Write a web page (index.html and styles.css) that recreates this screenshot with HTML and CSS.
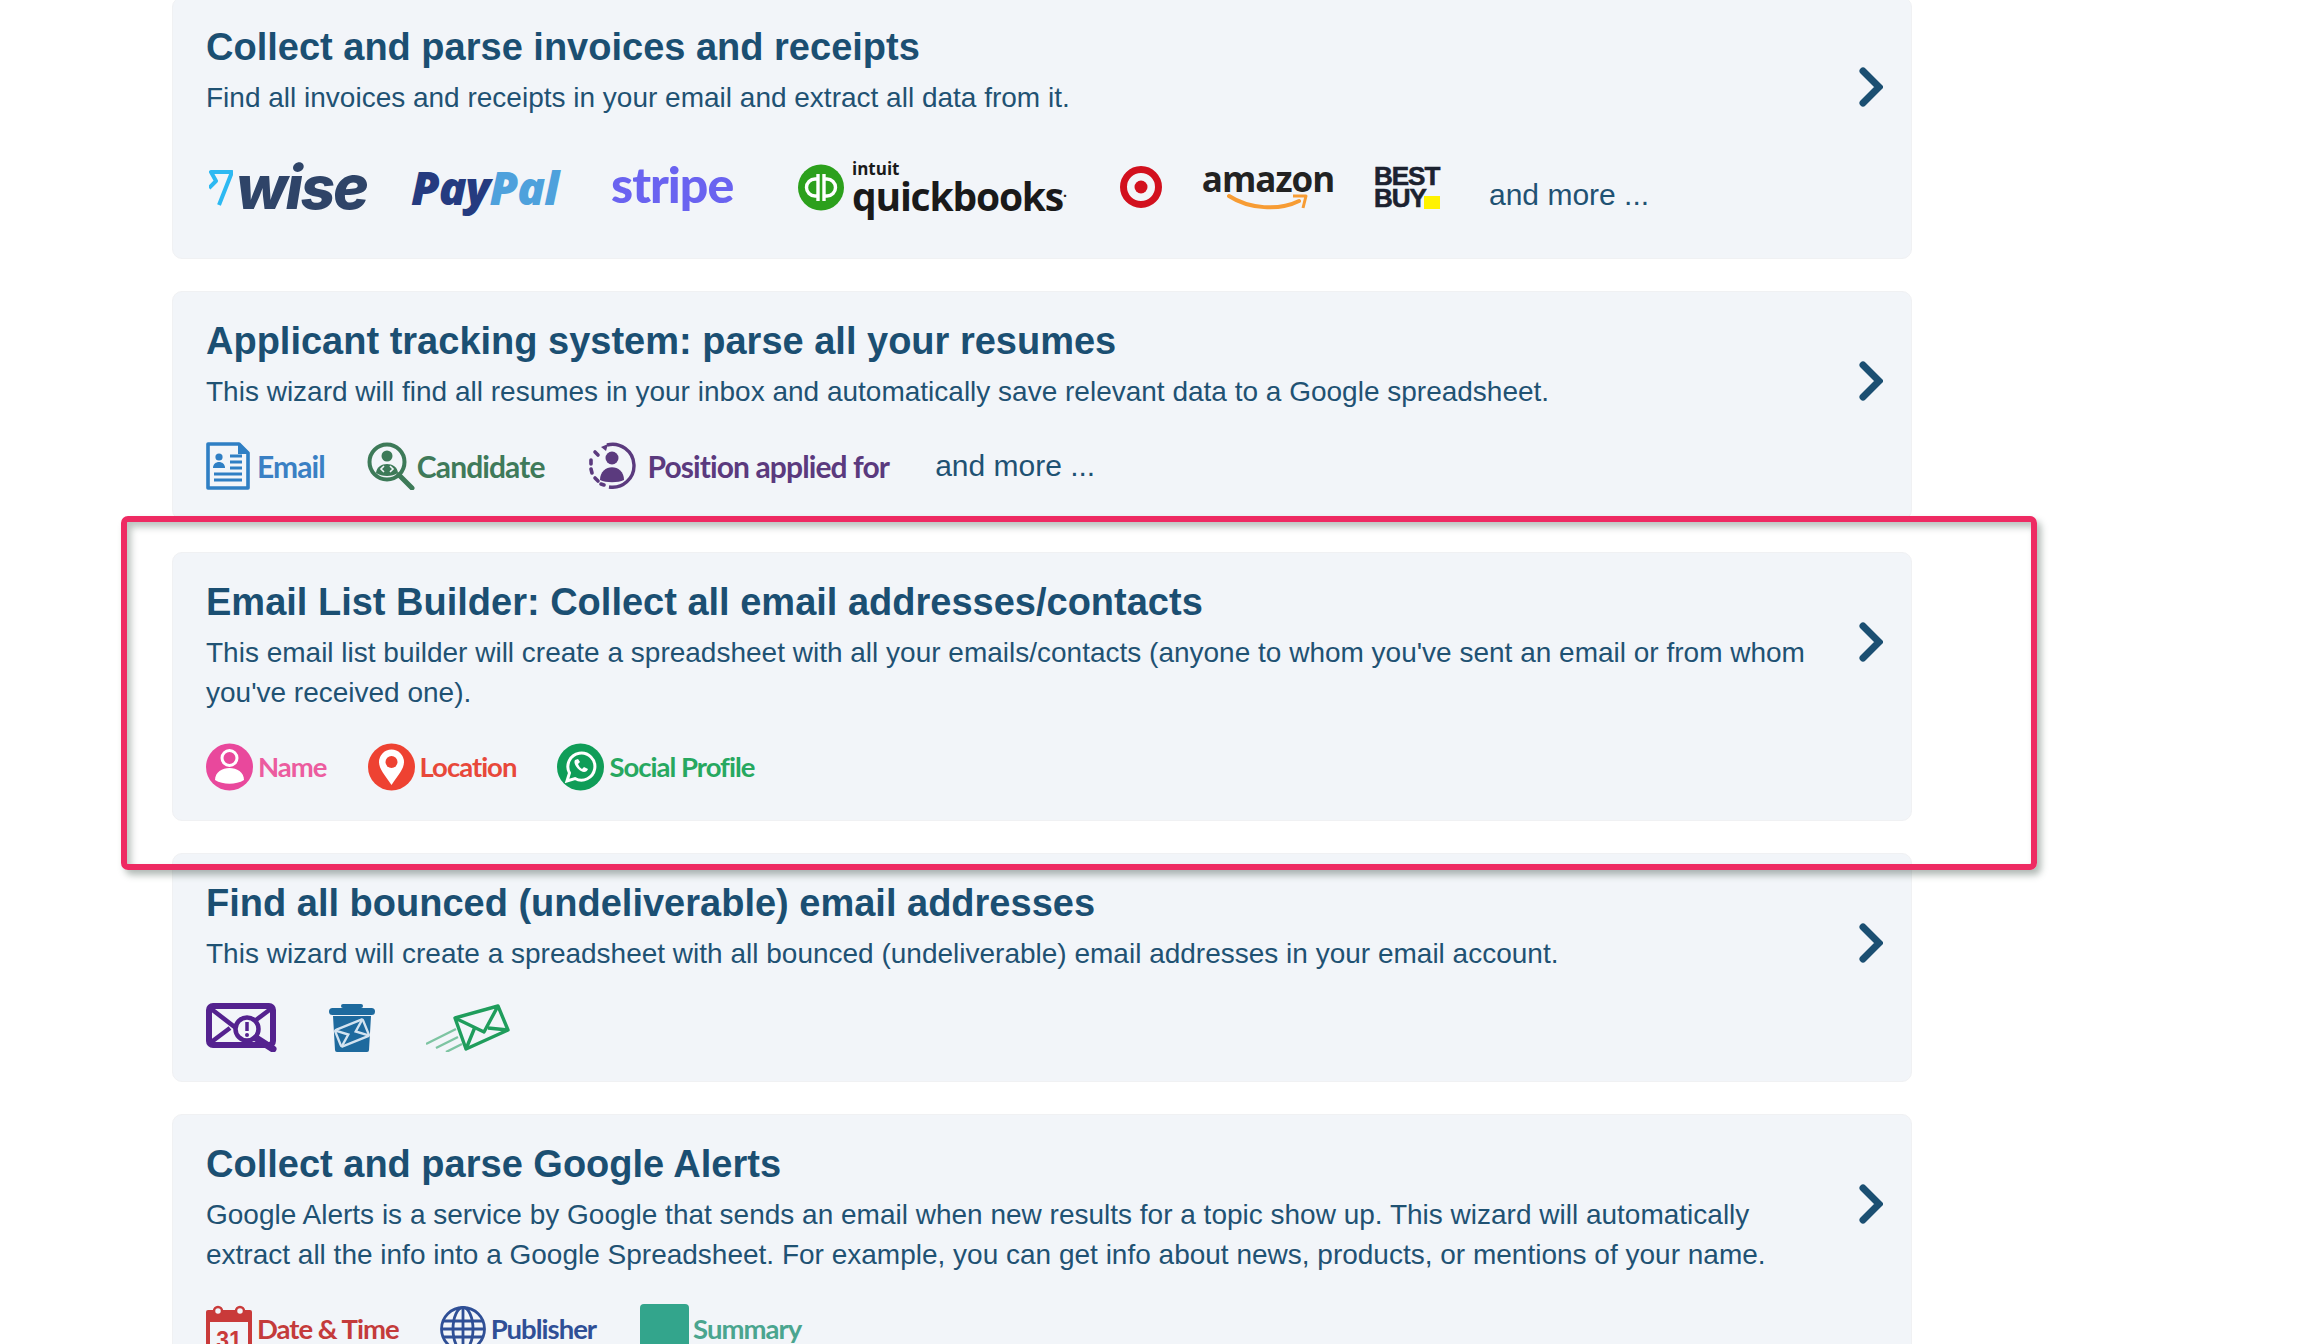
FILE: index.html
```html
<!DOCTYPE html>
<html lang="en">
<head>
<meta charset="utf-8">
<title>Wizards</title>
<link rel="stylesheet" href="styles.css">
</head>
<body>
<main class="list">

<section class="card">
  <div class="body">
    <h2>Collect and parse invoices and receipts</h2>
    <p>Find all invoices and receipts in your email and extract all data from it.</p>
    <div class="logos">
      <span class="logo wise">
        <svg width="24" height="38" viewBox="0 0 24 38"><path d="M0 20 L7 13 L2 4 H23 L10 37" fill="none" stroke="#2db9f2" stroke-width="4" stroke-linejoin="round"/></svg>
        <span class="wise-word">wise</span>
      </span>
      <span class="logo paypal"><span class="pay">Pay</span><span class="pal">Pal</span></span>
      <span class="logo stripe">stripe</span>
      <span class="logo qb">
        <svg width="46" height="47" viewBox="0 0 46 47"><circle cx="23" cy="23.5" r="23" fill="#2ca01c"/><g fill="none" stroke="#fff" stroke-width="3.4"><path d="M20 10v27"/><path d="M26 37V10"/><path d="M20 15h-3a8 8 0 0 0 0 17h3"/><path d="M26 15h3a8 8 0 0 1 0 17h-3"/></g></svg>
        <span class="qb-words"><span class="intuit">intuit</span><span class="quick">quickbooks<sup class="dot">.</sup></span></span>
      </span>
      <span class="logo target">
        <svg width="42" height="42" viewBox="0 0 42 42"><circle cx="21" cy="21" r="17.5" fill="none" stroke="#d2101e" stroke-width="7"/><circle cx="21" cy="21" r="6.5" fill="#d2101e"/></svg>
      </span>
      <span class="logo amazon">
        <span class="amazon-word">amazon</span>
        <svg class="smile" width="82" height="18" viewBox="0 0 82 18"><path d="M2 3 C22 16 52 18 72 8" fill="none" stroke="#f79c34" stroke-width="4" stroke-linecap="round"/><path d="M66 3 L79 3 L76 15" fill="none" stroke="#f79c34" stroke-width="3" stroke-linejoin="round"/></svg>
      </span>
      <span class="logo bestbuy"><span class="bb">BEST<br>BUY</span><span class="bb-tag"></span></span>
      <span class="more more-logos">and more ...</span>
    </div>
  </div>
  <svg class="chev" width="24" height="40" viewBox="0 0 24 40"><path d="M4 4 L20 20 L4 36" fill="none" stroke="#1b4f72" stroke-width="7" stroke-linecap="round"/></svg>
</section>

<section class="card">
  <div class="body">
    <h2>Applicant tracking system: parse all your resumes</h2>
    <p>This wizard will find all resumes in your inbox and automatically save relevant data to a Google spreadsheet.</p>
    <div class="tags tags-large">
      <span class="tag tag-email c-email">
        <svg width="44" height="48" viewBox="0 0 44 48"><path d="M2 2H33L42 11V46H2Z" fill="none" stroke="#2f7fc4" stroke-width="3.6" stroke-linejoin="round"/><path d="M32 2V12H42" fill="#2f7fc4"/><circle cx="13" cy="15" r="3.6" fill="#2f7fc4"/><path d="M7 26c0-8 12-8 12 0z" fill="#2f7fc4"/><path d="M24 14H36M24 20H36M24 26H36M8 32H36M8 38H36" stroke="#2f7fc4" stroke-width="3"/></svg>
        <span>Email</span>
      </span>
      <span class="tag tag-candidate c-candidate">
        <svg width="48" height="48" viewBox="0 0 48 48"><circle cx="20" cy="20" r="17.5" fill="none" stroke="#3d7a58" stroke-width="4"/><path d="M32 33 L45 46" stroke="#3d7a58" stroke-width="5" stroke-linecap="round"/><circle cx="20" cy="14" r="5.5" fill="#3d7a58"/><path d="M9 31c1-12 21-12 22 0c-6 4-16 4-22 0z" fill="#3d7a58"/><path d="M17 24l-3 3 3 3M23 24l3 3-3 3" stroke="#f2f5f9" stroke-width="1.6" fill="none"/></svg>
        <span>Candidate</span>
      </span>
      <span class="tag tag-position c-position">
        <svg width="50" height="48" viewBox="0 0 50 48"><path d="M20 3A21.500 21.500 0 1 1 22 45" fill="none" stroke="#5b3a7e" stroke-width="3.400"/><path d="M14 5l7-3-2 7z" fill="#5b3a7e"/><path d="M8 10l3 3M4 18v4M4 27l1 4M8 36l3 3M14 42l3 1" stroke="#5b3a7e" stroke-width="3.600" stroke-linecap="round"/><circle cx="25" cy="16" r="6.500" fill="#5b3a7e"/><path d="M13 38c0-17 24-17 24 0c-6 3-18 3-24 0z" fill="#5b3a7e"/></svg>
        <span>Position applied for</span>
      </span>
      <span class="more more-tags">and more ...</span>
    </div>
  </div>
  <svg class="chev" width="24" height="40" viewBox="0 0 24 40"><path d="M4 4 L20 20 L4 36" fill="none" stroke="#1b4f72" stroke-width="7" stroke-linecap="round"/></svg>
</section>

<section class="card">
  <div class="body">
    <h2>Email List Builder: Collect all email addresses/contacts</h2>
    <p>This email list builder will create a spreadsheet with all your emails/contacts (anyone to whom you've sent an email or from whom you've received one).</p>
    <div class="tags">
      <span class="tag c-name">
        <svg width="47" height="48" viewBox="0 0 47 48"><circle cx="23.500" cy="24" r="23.500" fill="#e9489c"/><circle cx="23.500" cy="15" r="7.500" fill="none" stroke="#fff" stroke-width="3"/><path d="M9 37c0-16 29-16 29 0c-8 5-21 5-29 0z" fill="#fff"/></svg>
        <span>Name</span>
      </span>
      <span class="tag c-location">
        <svg width="47" height="48" viewBox="0 0 47 48"><circle cx="23.500" cy="24" r="23.500" fill="#ee4232"/><path d="M23.500 42C17 32 11 26 11 19a12.500 12.500 0 0 1 25 0c0 7-6 13-12.500 23z" fill="#fff"/><circle cx="23.500" cy="19" r="6" fill="#ee4232"/></svg>
        <span>Location</span>
      </span>
      <span class="tag c-social">
        <svg width="47" height="48" viewBox="0 0 47 48"><circle cx="23.500" cy="24" r="23.500" fill="#0f9d58"/><path d="M10 38l2.500-8a13.500 13.500 0 1 1 5.500 5.500z" fill="none" stroke="#fff" stroke-width="3"/><path d="M18 17c-2 3 2 9 6 11c3 2 6 1 7-2l-4-2-2 2c-2-1-3-3-4-5l2-2-2-3z" fill="#fff"/></svg>
        <span>Social Profile</span>
      </span>
    </div>
  </div>
  <svg class="chev" width="24" height="40" viewBox="0 0 24 40"><path d="M4 4 L20 20 L4 36" fill="none" stroke="#1b4f72" stroke-width="7" stroke-linecap="round"/></svg>
</section>

<section class="card">
  <div class="body">
    <h2>Find all bounced (undeliverable) email addresses</h2>
    <p>This wizard will create a spreadsheet with all bounced (undeliverable) email addresses in your email account.</p>
    <div class="tags tags-plain">
      <svg width="72" height="49" viewBox="0 0 72 49"><rect x="3" y="3" width="64" height="39" rx="4" fill="none" stroke="#54228f" stroke-width="6"/><path d="M4 5l26 20 6-3M4 40l20-15M66 5L50 17M62 42H30" fill="none" stroke="#54228f" stroke-width="4.500"/><circle cx="41" cy="26" r="11.500" fill="#f2f5f9" stroke="#54228f" stroke-width="4.500"/><path d="M41 19v9" stroke="#54228f" stroke-width="3.500"/><circle cx="41" cy="32" r="2" fill="#54228f"/><path d="M50 35 L67 46" stroke="#54228f" stroke-width="7" stroke-linecap="round"/></svg>
      <svg width="46" height="49" viewBox="0 0 46 49"><path d="M14 3h18" stroke="#1e6a9e" stroke-width="4" stroke-linecap="round"/><rect x="0" y="5" width="46" height="7" rx="3.500" fill="#1e6a9e"/><path d="M4 13H42L40 47a2 2 0 0 1-2 2H8a2 2 0 0 1-2-2z" fill="#1e6a9e"/><g transform="rotate(-22 23 30)" fill="none" stroke="#d3e3f0" stroke-width="2.400"><rect x="8" y="21" width="30" height="18" rx="2"/><path d="M8 21l11 9-11 9M38 21l-11 9 11 9"/></g></svg>
      <svg width="84" height="48" viewBox="0 0 84 48"><g fill="none" stroke="#1f9d5c" stroke-width="3.400" stroke-linejoin="round"><path d="M29 14 L72 2 L82 26 L40 45 Z"/><path d="M29 14 L58 28 L72 2"/><path d="M40 45 L49 23M82 26 L62 24"/></g><path d="M0 40L30 25M10 44L32 33M20 48L36 40" stroke="#1f9d5c" stroke-width="2.400" opacity=".55"/></svg>
    </div>
  </div>
  <svg class="chev" width="24" height="40" viewBox="0 0 24 40"><path d="M4 4 L20 20 L4 36" fill="none" stroke="#1b4f72" stroke-width="7" stroke-linecap="round"/></svg>
</section>

<section class="card">
  <div class="body">
    <h2>Collect and parse Google Alerts</h2>
    <p>Google Alerts is a service by Google that sends an email when new results for a topic show up. This wizard will automatically extract all the info into a Google Spreadsheet. For example, you can get info about news, products, or mentions of your name.</p>
    <div class="tags">
      <span class="tag c-date">
        <svg width="46" height="48" viewBox="0 0 46 48"><rect x="0" y="5" width="46" height="43" rx="2" fill="#c93a3a"/><rect x="4" y="17" width="38" height="31" fill="#f2f5f9"/><circle cx="12" cy="6" r="4" fill="#f2f5f9" stroke="#c93a3a" stroke-width="2.500"/><circle cx="34" cy="6" r="4" fill="#f2f5f9" stroke="#c93a3a" stroke-width="2.500"/><text x="23" y="43" text-anchor="middle" class="cal-num">31</text></svg>
        <span>Date &amp; Time</span>
      </span>
      <span class="tag c-publisher">
        <svg width="46" height="48" viewBox="0 0 46 48"><g fill="none" stroke="#2f4f96" stroke-width="2.800"><circle cx="23" cy="24" r="21.500"/><ellipse cx="23" cy="24" rx="10" ry="21.500"/><path d="M23 2v44M3 16h40M3 32h40M1 24h44"/></g></svg>
        <span>Publisher</span>
      </span>
      <span class="tag tag-summary c-summary">
        <span class="square"></span>
        <span>Summary</span>
      </span>
    </div>
  </div>
  <svg class="chev" width="24" height="40" viewBox="0 0 24 40"><path d="M4 4 L20 20 L4 36" fill="none" stroke="#1b4f72" stroke-width="7" stroke-linecap="round"/></svg>
</section>

</main>
<div class="highlight"></div>
</body>
</html>
```

FILE: styles.css
```css
html, body {
  margin: 0;
  height: 1344px;
  overflow: hidden;
  background: #fff;
}
body {
  position: relative;
  font-family: "Liberation Sans", Arial, sans-serif;
  color: #1f5273;
}
svg { flex: none; }
.list {
  width: 1740px;
  margin: -3px 0 0 172px;
  display: flex;
  flex-direction: column;
  gap: 32px;
}
.card {
  display: flex;
  align-items: flex-start;
  box-sizing: border-box;
  padding: 23px 0 29px 33px;
  background: #f2f5f9;
  border: 1px solid #f0f1f3;
  border-radius: 10px;
}
.body {
  width: 1620px;
  flex: none;
}
.chev {
  margin: 46px 0 0 33px;
}
h2 {
  margin: 0;
  font-size: 38px;
  line-height: 53px;
  font-weight: 700;
  color: #1b4f72;
}
p {
  margin: 4px 0 0;
  font-size: 28px;
  line-height: 40px;
  color: #1f5273;
}
.tags {
  display: flex;
  align-items: center;
  gap: 41px;
  height: 49px;
  margin-top: 29px;
}
.tags-plain { gap: 51px; }
.tag {
  display: inline-flex;
  align-items: center;
  gap: 5px;
  font-family: Lato, "Liberation Sans", sans-serif;
  font-weight: 700;
  font-size: 27.500px;
  letter-spacing: -1px;
  white-space: nowrap;
}
.tags-large { gap: 42px; }
.tags-large .tag { font-size: 30px; letter-spacing: -.9px; }
.tags-large .tag-email { gap: 7px; }
.tags-large .tag-candidate { gap: 2px; }
.tags-large .tag-position { gap: 11px; }
.tag-summary { margin-left: 3px; gap: 4px; }
.c-email { color: #3a80c4; }
.c-candidate { color: #3f7a5a; }
.c-position { color: #5b3a7e; }
.c-name { color: #ec5c9f; }
.c-location { color: #e8483a; }
.c-social { color: #27a860; }
.c-date { color: #c43b3b; }
.c-publisher { color: #2f4f96; }
.c-summary { color: #4aa58f; }
.square {
  width: 49px;
  height: 49px;
  border-radius: 4px;
  background: #33a58c;
}
.cal-num {
  font-family: "Liberation Sans", sans-serif;
  font-size: 23px;
  font-weight: 700;
  letter-spacing: 0;
  fill: #c93a3a;
}
.more {
  font-size: 30px;
  color: #1f5273;
  white-space: nowrap;
}
.more-tags { margin-left: 4px; }

/* logo row */
.logos {
  display: flex;
  align-items: center;
  height: 84px;
  margin-top: 27px;
}
.logo {
  display: inline-flex;
  align-items: center;
  flex: none;
  white-space: nowrap;
}
.wise { width: 163px; margin-left: 3px; gap: 3px; }
.wise-word {
  font-family: Inter, sans-serif;
  font-style: italic;
  font-weight: 800;
  font-size: 60px;
  line-height: 40px;
  letter-spacing: -2px;
  color: #2f4468;
}
.paypal {
  width: 149px;
  margin-left: 39px;
  font-family: "Open Sans", sans-serif;
  font-style: italic;
  font-weight: 800;
  font-size: 46px;
  letter-spacing: -1px;
}
.pay { color: #253b80; }
.pal { color: #4ea1dc; }
.stripe {
  width: 122px;
  margin-left: 51px;
  margin-top: -6px;
  font-family: Lato, sans-serif;
  font-weight: 900;
  font-size: 50px;
  line-height: 50px;
  letter-spacing: -1px;
  color: #6a63f0;
}
.qb { width: 268px; margin-left: 65px; gap: 8px; }
.qb-words {
  display: flex;
  flex-direction: column;
  gap: 2px;
  color: #1a1a1a;
  font-family: "Open Sans", sans-serif;
}
.intuit { font-size: 17px; line-height: 16px; font-weight: 700; }
.quick { font-size: 39px; line-height: 34px; font-weight: 700; letter-spacing: -1.200px; }
.dot { font-size: 14px; line-height: 0; }
.target { width: 42px; margin-left: 54px; }
.amazon {
  width: 132px;
  margin-left: 40px;
  flex-direction: column;
  align-items: center;
}
.amazon-word {
  font-family: "Open Sans", sans-serif;
  font-weight: 700;
  font-size: 35px;
  line-height: 30px;
  letter-spacing: -1px;
  color: #222;
}
.smile { margin-top: -1px; }
.bestbuy { width: 66px; margin-left: 40px; position: relative; height: 44px; align-items: flex-start; }
.bb {
  font-family: "Liberation Sans", sans-serif;
  font-weight: 700;
  font-size: 26px;
  line-height: 22px;
  letter-spacing: -1px;
  -webkit-text-stroke: .6px #1c2230;
  color: #1c2230;
}
.bb-tag {
  position: absolute;
  right: 0;
  bottom: 0;
  width: 16px;
  height: 13px;
  background: #fff200;
}
.more-logos { margin: 16px 0 0 49px; }

/* annotation drawn over the page */
.highlight {
  position: absolute;
  left: 121px;
  top: 516px;
  width: 1916px;
  height: 354px;
  box-sizing: border-box;
  border: 6px solid #ee2a62;
  border-radius: 7px;
  box-shadow: 4px 5px 7px rgba(60, 80, 70, .4), inset 4px 5px 7px rgba(60, 80, 70, .35);
}
```
